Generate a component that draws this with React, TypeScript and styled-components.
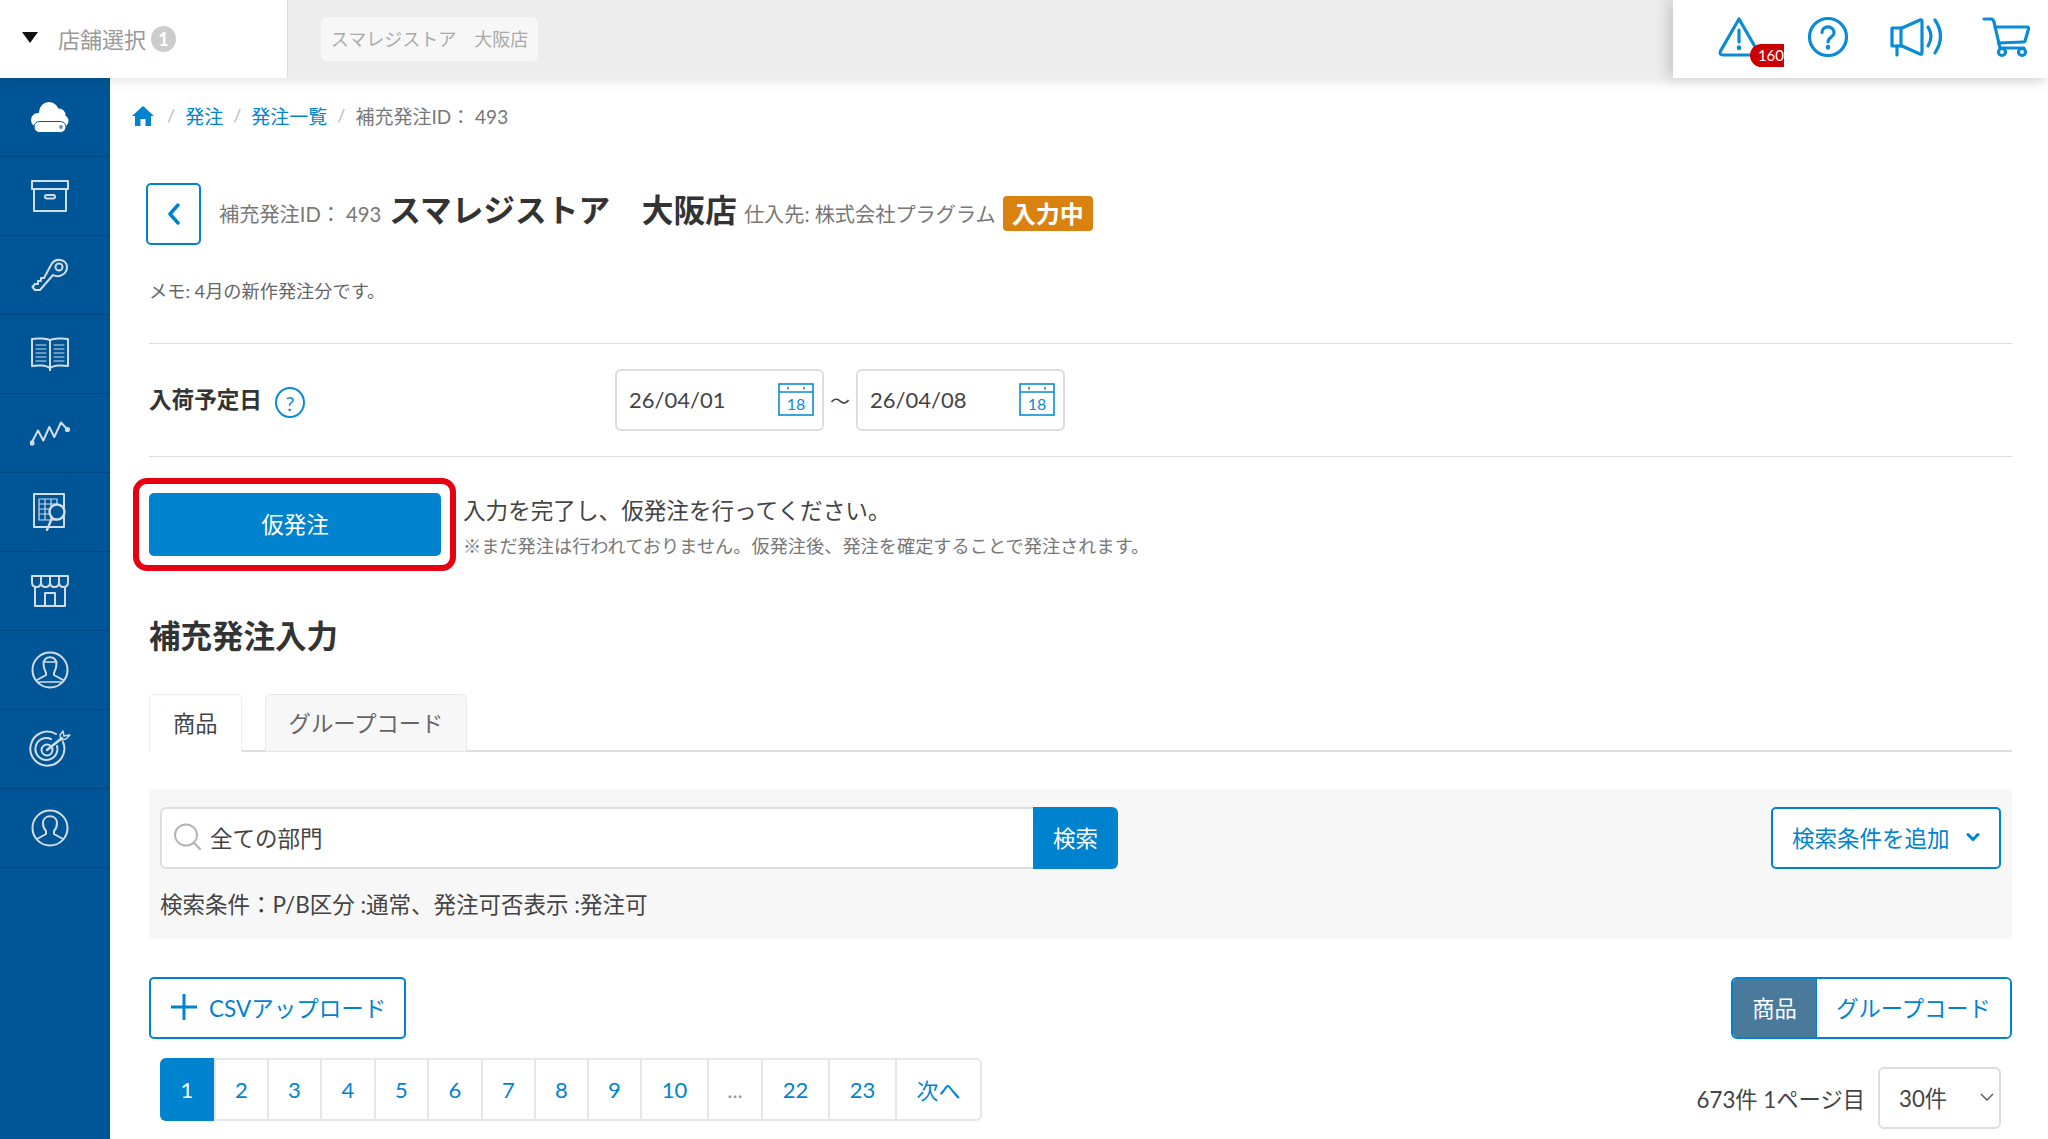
import React from "react";
import styled, { createGlobalStyle } from "styled-components";

const BLUE = "#0a8bd6";
const PRIMARY = "#0083cf";

const pages = [
  { label: "1", width: 54, active: true },
  { label: "2", width: 53 },
  { label: "3", width: 53 },
  { label: "4", width: 54 },
  { label: "5", width: 53 },
  { label: "6", width: 54 },
  { label: "7", width: 53 },
  { label: "8", width: 53 },
  { label: "9", width: 53 },
  { label: "10", width: 67 },
  { label: "...", width: 54, muted: true },
  { label: "22", width: 67 },
  { label: "23", width: 67 },
  { label: "次へ", width: 85 },
];

const WarningIcon = () => (
  <TopSvg width="44" height="42" viewBox="0 0 44 42">
    <path d="M22 3 L40.500 35 Q42 39 38 39 L6 39 Q2 39 3.500 35 Z" />
    <path d="M22 14 V26" />
    <path d="M22 31.500 V32" strokeWidth="4.500" />
  </TopSvg>
);

const HelpIcon = () => (
  <TopSvg width="42" height="42" viewBox="0 0 42 42" $gap={46}>
    <circle cx="21" cy="21" r="18.500" />
    <path d="M15 16.500 C15 8.500 27.500 9.500 27 17 C26.800 21 21 21 21 26" />
    <path d="M21 31 V31.500" strokeWidth="4.500" />
  </TopSvg>
);

const MegaphoneIcon = () => (
  <TopSvg width="54" height="40" viewBox="0 0 54 40" $gap={41}>
    <path d="M2 11 H12 L30 3 Q32 2 32 5 V35 Q32 38 30 37 L12 29 H2 Z" />
    <path d="M11 11 V29" />
    <path d="M7 29 V38" />
    <path d="M38 10 Q44 19 38 29" />
    <path d="M45 3 Q56 19 45 36" />
  </TopSvg>
);

const CartIcon = () => (
  <TopSvg width="48" height="42" viewBox="0 0 48 42" $gap={38}>
    <path d="M2 3 H9 Q11 3 12 6 L18 32 H42" />
    <path d="M13 11 H45 Q47 11 46.500 13 L43 25 Q42.500 26 41 26 L16.500 27" />
    <circle cx="20" cy="36" r="3.500" />
    <circle cx="40" cy="36" r="3.500" />
  </TopSvg>
);

const CloudIcon = () => (
  <svg width="40" height="32" viewBox="0 0 40 32">
    <g fill="#fff">
      <circle cx="8" cy="19" r="7" />
      <circle cx="19" cy="11" r="10" />
      <circle cx="29" cy="14" r="6.500" />
      <circle cx="32" cy="20" r="6.500" />
      <rect x="8" y="12" width="24" height="12" />
    </g>
    <rect x="4" y="20.500" width="32" height="11" rx="5.500" fill="#fff" stroke="#005596" strokeWidth="1" />
    <circle cx="31" cy="26" r="1.900" fill="#6f95b6" />
  </svg>
);

const BoxIcon = () => (
  <SideSvg width="38" height="32" viewBox="0 0 38 32">
    <rect x="1" y="1" width="36" height="8" />
    <rect x="3" y="9" width="32" height="22" />
    <rect x="14" y="15" width="10" height="3.500" rx="1.700" />
  </SideSvg>
);

const KeyIcon = () => (
  <SideSvg width="38" height="34" viewBox="0 0 38 34">
    <path d="M20 7 C24 -1 36 1 36 9 C36 17 27 20 22 17 L9 32 H4 L1.500 29 L4 26 H7 V23 H10 V20 H13 Z" />
    <circle cx="28" cy="9" r="3.500" />
  </SideSvg>
);

const BookIcon = () => (
  <SideSvg width="38" height="34" viewBox="0 0 38 34">
    <path d="M19 3 C15 1.500 6 1 1 2 V29 C6 28 15 28 19 31 C23 28 32 28 37 29 V2 C32 1 23 1.500 19 3 Z" />
    <path d="M19 3 V34" />
    <path d="M5 8 H15 M5 12 H15 M5 16 H15 M5 20 H15 M5 24 H15 M23 8 H33 M23 12 H33 M23 16 H33 M23 20 H33 M23 24 H33" strokeWidth="1.200" />
  </SideSvg>
);

const ChartIcon = () => (
  <SideSvg width="40" height="26" viewBox="0 0 40 26" strokeWidth="2.400">
    <path d="M1.500 23 L8 10.500 L13.300 20.500 L19.300 7 L24.300 17 L31 2.500 L37.500 9.500" />
    <circle cx="2" cy="23" r="1.600" />
    <circle cx="37.500" cy="9.500" r="1.600" />
  </SideSvg>
);

const TableIcon = () => (
  <SideSvg width="34" height="38" viewBox="0 0 34 38">
    <rect x="1" y="1" width="30" height="33" />
    <path d="M6 6 H24 V27 H6 Z M6 11 H24 M6 16 H24 M6 21 H24 M12 6 V27 M18 6 V27" strokeWidth="1.200" />
    <circle cx="24" cy="19" r="7.500" fill="#005596" strokeWidth="2.400" />
    <path d="M19 25 L14 37" strokeWidth="2.400" />
  </SideSvg>
);

const StoreIcon = () => (
  <SideSvg width="38" height="34" viewBox="0 0 38 34">
    <path d="M1 2 H37 V8 Q37 13 32.500 13 Q28 13 28 8 Q28 13 23.500 13 Q19 13 19 8 Q19 13 14.500 13 Q10 13 10 8 Q10 13 5.500 13 Q1 13 1 8 Z" />
    <path d="M10 2 V8 M19 2 V8 M28 2 V8" />
    <path d="M4 13 V32 H34 V13" />
    <path d="M14 32 V19 H24 V32" />
  </SideSvg>
);

const StaffIcon = () => (
  <SideSvg width="38" height="38" viewBox="0 0 38 38">
    <circle cx="19" cy="19" r="17.500" />
    <path d="M12.500 13 C12 4 26 4 25.500 13 C25.500 17 24 20 23 22 V24 L32 29 M15 22 C14 20 12.500 17 12.500 13 M15 22 V24 L6 29" />
    <path d="M12.500 11 H25.500" strokeWidth="1.400" />
    <path d="M8 31 H30" strokeWidth="1.400" />
  </SideSvg>
);

const TargetIcon = () => (
  <SideSvg width="42" height="38" viewBox="0 0 42 38">
    <path d="M34 12 A17 17 0 1 1 27 4" />
    <path d="M28 16 A11 11 0 1 1 22 9" />
    <circle cx="18" cy="20" r="5.500" />
    <path d="M18 20 L33 8" strokeWidth="2.400" />
    <path d="M31 5 L34 1 L35 6 L41 5 L37 9 L32 10 Z" strokeWidth="1.400" />
  </SideSvg>
);

const UserIcon = () => (
  <SideSvg width="38" height="38" viewBox="0 0 38 38">
    <circle cx="19" cy="19" r="17.500" />
    <path d="M6 30 L15 25 V22 C13 20 12 17 12 14 C12 5 26 5 26 14 C26 17 25 20 23 22 V25 L32 30" />
  </SideSvg>
);

const CalendarIcon = () => (
  <CalendarSvg width="36" height="33" viewBox="0 0 36 33">
    <rect x="1" y="1" width="34" height="31" fill="none" stroke={BLUE} strokeWidth="1.600" />
    <path d="M1 9 H35" stroke={BLUE} strokeWidth="1.600" />
    <path d="M10 4 V6.500 M26 4 V6.500" stroke={BLUE} strokeWidth="1.600" />
    <text x="18" y="27" textAnchor="middle" fontSize="16" fill={BLUE}>
      18
    </text>
  </CalendarSvg>
);

const App = () => {
  return (
    <>
      <GlobalStyle />
      <Page>
        <TopBar>
          <StoreSelect>
            <Caret />
            <StoreSelectLabel>店舗選択</StoreSelectLabel>
            <CountBadge>1</CountBadge>
          </StoreSelect>
          <StoreStrip>
            <StoreChip>スマレジストア　大阪店</StoreChip>
          </StoreStrip>
          <TopActions>
            <AlertButton>
              <WarningIcon />
              <AlertCount>160</AlertCount>
            </AlertButton>
            <HelpIcon />
            <MegaphoneIcon />
            <CartIcon />
          </TopActions>
        </TopBar>

        <Body>
          <Sidebar>
            <SideItem><CloudIcon /></SideItem>
            <SideItem><BoxIcon /></SideItem>
            <SideItem><KeyIcon /></SideItem>
            <SideItem><BookIcon /></SideItem>
            <SideItem><ChartIcon /></SideItem>
            <SideItem><TableIcon /></SideItem>
            <SideItem><StoreIcon /></SideItem>
            <SideItem><StaffIcon /></SideItem>
            <SideItem><TargetIcon /></SideItem>
            <SideItem><UserIcon /></SideItem>
          </Sidebar>

          <Main>
            <Breadcrumb>
              <HomeSvg width="22" height="20" viewBox="0 0 22 20">
                <path
                  fill={PRIMARY}
                  d="M11 0 L22 10 L19 10 V20 H13.500 V13 H8.500 V20 H3 V10 H0 Z"
                />
              </HomeSvg>
              <CrumbSep>/</CrumbSep>
              <CrumbLink>発注</CrumbLink>
              <CrumbSep>/</CrumbSep>
              <CrumbLink>発注一覧</CrumbLink>
              <CrumbSep>/</CrumbSep>
              <CrumbCurrent>補充発注ID： 493</CrumbCurrent>
            </Breadcrumb>

            <TitleRow>
              <BackButton>
                <svg width="14" height="22" viewBox="0 0 14 22">
                  <path d="M11 2 L3 11 L11 20" fill="none" stroke={PRIMARY} strokeWidth="3.500" strokeLinecap="round" strokeLinejoin="round" />
                </svg>
              </BackButton>
              <TitleMeta>補充発注ID： 493</TitleMeta>
              <Title>スマレジストア　大阪店</Title>
              <TitleMeta>仕入先: 株式会社プラグラム</TitleMeta>
              <StatusBadge>入力中</StatusBadge>
            </TitleRow>

            <Memo>メモ: 4月の新作発注分です。</Memo>

            <DateRow>
              <DateLabel>
                入荷予定日
                <HintCircle>?</HintCircle>
              </DateLabel>
              <DateBox>
                26/04/01
                <CalendarIcon />
              </DateBox>
              <DateTilde>～</DateTilde>
              <DateBox>
                26/04/08
                <CalendarIcon />
              </DateBox>
            </DateRow>

            <ActionRow>
              <HighlightedAction>
                <PrimaryButton>仮発注</PrimaryButton>
              </HighlightedAction>
              <ActionText>
                <ActionLead>入力を完了し、仮発注を行ってください。</ActionLead>
                <ActionNote>※まだ発注は行われておりません。仮発注後、発注を確定することで発注されます。</ActionNote>
              </ActionText>
            </ActionRow>

            <SectionTitle>補充発注入力</SectionTitle>

            <Tabs>
              <Tab $active>商品</Tab>
              <Tab>グループコード</Tab>
            </Tabs>

            <SearchPanel>
              <SearchRow>
                <SearchGroup>
                  <SearchInput>
                    <svg width="30" height="28" viewBox="0 0 30 28">
                      <ellipse cx="13" cy="12" rx="11" ry="10.500" fill="none" stroke="#b5b5b5" strokeWidth="2" />
                      <path d="M21 20 L27 26" stroke="#b5b5b5" strokeWidth="2.400" strokeLinecap="round" />
                    </svg>
                    全ての部門
                  </SearchInput>
                  <SearchButton>検索</SearchButton>
                </SearchGroup>
                <OutlineButton>
                  検索条件を追加
                  <svg width="14" height="10" viewBox="0 0 14 10">
                    <path d="M2 2.500 L7 7.500 L12 2.500" fill="none" stroke={PRIMARY} strokeWidth="3" strokeLinecap="round" strokeLinejoin="round" />
                  </svg>
                </OutlineButton>
              </SearchRow>
              <Conditions>検索条件：P/B区分 :通常、発注可否表示 :発注可</Conditions>
            </SearchPanel>

            <ToolRow>
              <CsvButton>
                <svg width="28" height="28" viewBox="0 0 28 28">
                  <path d="M14 1 V27 M1 14 H27" stroke={PRIMARY} strokeWidth="3" />
                </svg>
                CSVアップロード
              </CsvButton>
              <Toggle>
                <ToggleItem $active>商品</ToggleItem>
                <ToggleItem>グループコード</ToggleItem>
              </Toggle>
            </ToolRow>

            <ListRow>
              <Pagination>
                {pages.map((p) => (
                  <PageItem key={p.label} $width={p.width} $active={p.active} $muted={p.muted}>
                    {p.label}
                  </PageItem>
                ))}
              </Pagination>
              <ListSummary>
                673件 1ページ目
                <PerPage>
                  30件
                  <svg width="16" height="10" viewBox="0 0 16 10">
                    <path d="M2 2 L8 8 L14 2" fill="none" stroke="#555" strokeWidth="1.400" />
                  </svg>
                </PerPage>
              </ListSummary>
            </ListRow>
          </Main>
        </Body>
      </Page>
    </>
  );
};

export default App;

const GlobalStyle = createGlobalStyle`
  html, body {
    margin: 0;
    padding: 0;
    background: #fff;
  }
  body {
    font-family: Lato, "Noto Sans CJK JP", sans-serif;
    color: #333;
  }
  * {
    box-sizing: border-box;
  }
`;

const Page = styled.div`
  width: 2048px;
  height: 1139px;
  overflow: hidden;
  display: flex;
  flex-direction: column;
`;

const TopBar = styled.header`
  position: relative;
  z-index: 2;
  display: flex;
  height: 78px;
  flex: none;
  box-shadow: 0 2px 14px rgba(0, 0, 0, 0.12);
`;

const StoreSelect = styled.div`
  width: 288px;
  flex: none;
  background: #fff;
  border-right: 1px solid #ddd;
  display: flex;
  align-items: center;
  padding: 0 0 3px 22px;
`;

const Caret = styled.span`
  width: 0;
  height: 0;
  border-left: 8px solid transparent;
  border-right: 8px solid transparent;
  border-top: 11px solid #111;
  margin-right: 20px;
`;

const StoreSelectLabel = styled.span`
  font-size: 22px;
  color: #999;
`;

const CountBadge = styled.span`
  width: 25px;
  height: 26px;
  border-radius: 50%;
  margin-left: 5px;
  margin-top: 3px;
  background: #ccc;
  color: #fff;
  font-size: 18px;
  font-weight: 700;
  display: flex;
  align-items: center;
  justify-content: center;
`;

const StoreStrip = styled.div`
  flex: 1;
  background: #ededed;
  display: flex;
  align-items: center;
  padding-left: 33px;
`;

const StoreChip = styled.div`
  height: 44px;
  width: 217px;
  padding-bottom: 3px;
  background: #f7f7f7;
  border-radius: 6px;
  color: #aaa;
  font-size: 18px;
  display: flex;
  align-items: center;
  justify-content: center;
  white-space: nowrap;
`;

const TopActions = styled.div`
  width: 375px;
  flex: none;
  background: #fff;
  box-shadow: -6px 0 12px rgba(0, 0, 0, 0.14);
  display: flex;
  align-items: center;
  padding: 0 0 4px 44px;
`;

const TopSvg = styled.svg<{ $gap?: number }>`
  display: block;
  flex: none;
  margin-left: ${(p) => p.$gap ?? 0}px;
  fill: none;
  stroke: ${BLUE};
  stroke-width: 3.2;
  stroke-linecap: round;
  stroke-linejoin: round;
`;

const AlertButton = styled.div`
  position: relative;
  flex: none;
  width: 44px;
  height: 42px;
`;

const AlertCount = styled.span`
  position: absolute;
  left: 33px;
  top: 28px;
  width: 34px;
  height: 23px;
  background: #cc0000;
  border-radius: 12px 0 0 12px;
  color: #fff;
  font-size: 15px;
  line-height: 23px;
  text-align: right;
  white-space: nowrap;
  overflow: hidden;
`;

const Body = styled.div`
  flex: 1;
  display: flex;
  min-height: 0;
`;

const Sidebar = styled.nav`
  width: 110px;
  flex: none;
  background: #005596;
`;

const SideItem = styled.div`
  height: 79px;
  padding-right: 10px;
  border-bottom: 1px solid rgba(0, 0, 0, 0.14);
  display: flex;
  align-items: center;
  justify-content: center;
`;

const SideSvg = styled.svg`
  display: block;
  fill: none;
  stroke: #d3dde7;
  stroke-width: 2;
  stroke-linecap: round;
  stroke-linejoin: round;
`;

const Main = styled.main`
  flex: 1;
  min-width: 0;
  padding: 0 36px 0 39px;
`;

const Breadcrumb = styled.div`
  display: flex;
  align-items: center;
  height: 32px;
  margin: 21px 0 0 -17px;
  font-size: 19px;
`;

const HomeSvg = styled.svg`
  display: block;
  margin: 2px 3px 0 0;
`;

const CrumbSep = styled.span`
  color: #bbb;
  margin: 0 10px;
  font-size: 18px;
`;

const CrumbLink = styled.a`
  color: ${PRIMARY};
`;

const CrumbCurrent = styled.span`
  color: #777;
`;

const TitleRow = styled.div`
  display: flex;
  align-items: center;
  height: 62px;
  margin: 52px 0 0 -3px;
`;

const BackButton = styled.button`
  width: 55px;
  height: 62px;
  padding: 0;
  background: #fff;
  border: 2px solid ${PRIMARY};
  border-radius: 5px;
  display: flex;
  align-items: center;
  justify-content: center;
  margin-right: 18px;
`;

const TitleMeta = styled.span`
  margin-top: -1px;
  font-size: 20.200px;
  color: #777;
  white-space: nowrap;
`;

const Title = styled.h1`
  margin: -8px 7px 0 8px;
  font-size: 31.700px;
  line-height: 40px;
  font-weight: 700;
  color: #333;
  white-space: nowrap;
`;

const StatusBadge = styled.span`
  width: 90px;
  height: 35px;
  margin: -2px 0 0 7px;
  padding-bottom: 2px;
  border-radius: 4px;
  background: #d9820f;
  color: #fff;
  font-size: 24px;
  font-weight: 700;
  display: flex;
  align-items: center;
  justify-content: center;
`;

const Memo = styled.p`
  margin: 33px 0 0;
  font-size: 18.200px;
  line-height: 26px;
  color: #666;
`;

const DateRow = styled.div`
  margin-top: 39px;
  height: 114px;
  border-top: 1px solid #ddd;
  border-bottom: 1px solid #ddd;
  display: flex;
  align-items: center;
`;

const DateLabel = styled.div`
  width: 466px;
  padding-bottom: 4px;
  font-size: 22.600px;
  font-weight: 700;
  color: #333;
  display: flex;
  align-items: center;
`;

const HintCircle = styled.span`
  width: 30px;
  height: 31px;
  margin: 9px 0 0 13px;
  border: 2px solid ${BLUE};
  border-radius: 50%;
  color: ${BLUE};
  font-size: 20px;
  font-weight: 400;
  display: flex;
  align-items: center;
  justify-content: center;
`;

const DateBox = styled.div`
  width: 209px;
  height: 62px;
  padding: 0 8px 1px 12px;
  background: #fff;
  border: 2px solid #ddd;
  border-radius: 6px;
  font-size: 22px;
  color: #444;
  display: flex;
  align-items: center;
  justify-content: space-between;
`;

const CalendarSvg = styled.svg`
  display: block;
  flex: none;
`;

const DateTilde = styled.span`
  width: 32px;
  font-size: 20px;
  color: #444;
  text-align: center;
`;

const ActionRow = styled.div`
  margin-top: 36px;
  display: flex;
  align-items: center;
  height: 63px;
`;

const HighlightedAction = styled.div`
  position: relative;
  flex: none;
  &::after {
    content: "";
    position: absolute;
    inset: -15px -15px -15px -16px;
    border: 6px solid #e60012;
    border-radius: 14px;
    pointer-events: none;
  }
`;

const PrimaryButton = styled.button`
  display: block;
  width: 292px;
  height: 63px;
  padding: 0 0 3px;
  border: none;
  border-radius: 5px;
  background: ${PRIMARY};
  color: #fff;
  font-family: inherit;
  font-size: 22.500px;
`;

const ActionText = styled.div`
  margin-left: 22px;
  padding-top: 8px;
`;

const ActionLead = styled.div`
  font-size: 22.600px;
  line-height: 36px;
  color: #444;
`;

const ActionNote = styled.div`
  font-size: 18.200px;
  line-height: 35px;
  color: #777;
  white-space: nowrap;
`;

const SectionTitle = styled.h2`
  margin: 58px 0 0;
  font-size: 31.500px;
  line-height: 44px;
  font-weight: 700;
  color: #333;
`;

const Tabs = styled.div`
  margin-top: 36px;
  display: flex;
  gap: 23px;
  height: 58px;
  border-bottom: 2px solid #ddd;
`;

const Tab = styled.div<{ $active?: boolean }>`
  height: 58px;
  padding: 0 23px 3px;
  border: 1px solid ${(p) => (p.$active ? "#eee" : "#e8e8e8")};
  border-bottom: ${(p) => (p.$active ? "none" : "1px solid #e8e8e8")};
  border-radius: 5px 5px 0 0;
  background: ${(p) => (p.$active ? "#fff" : "#f7f7f7")};
  font-size: 22.300px;
  color: ${(p) => (p.$active ? "#444" : "#666")};
  display: flex;
  align-items: center;
`;

const SearchPanel = styled.section`
  margin-top: 37px;
  height: 150px;
  padding: 18px 11px 0 11px;
  background: #f7f7f7;
`;

const SearchRow = styled.div`
  display: flex;
  justify-content: space-between;
`;

const SearchGroup = styled.div`
  display: flex;
  width: 958px;
  height: 62px;
`;

const SearchInput = styled.div`
  flex: 1;
  padding: 0 0 3px 11px;
  background: #fff;
  border: 2px solid #ddd;
  border-right: none;
  border-radius: 6px 0 0 6px;
  font-size: 22.500px;
  color: #444;
  display: flex;
  align-items: center;
  gap: 7px;
`;

const SearchButton = styled.button`
  width: 85px;
  padding: 0 0 3px;
  border: none;
  border-radius: 0 6px 6px 0;
  background: ${PRIMARY};
  color: #fff;
  font-family: inherit;
  font-size: 22.500px;
`;

const OutlineButton = styled.button`
  width: 230px;
  height: 62px;
  padding: 0 19px 3px 19px;
  background: #fff;
  border: 2px solid ${PRIMARY};
  border-radius: 5px;
  color: ${PRIMARY};
  font-family: inherit;
  font-size: 22.500px;
  display: flex;
  align-items: center;
  justify-content: space-between;
  white-space: nowrap;
`;

const Conditions = styled.div`
  margin-top: 23px;
  font-size: 22.500px;
  line-height: 26px;
  color: #444;
  white-space: nowrap;
`;

const ToolRow = styled.div`
  margin-top: 38px;
  display: flex;
  justify-content: space-between;
`;

const CsvButton = styled.button`
  width: 257px;
  height: 62px;
  padding: 0 0 3px 19px;
  background: #fff;
  border: 2px solid ${PRIMARY};
  border-radius: 5px;
  color: ${PRIMARY};
  font-family: inherit;
  font-size: 22.500px;
  display: flex;
  align-items: center;
  gap: 11px;
  white-space: nowrap;
`;

const Toggle = styled.div`
  display: flex;
  width: 281px;
  height: 62px;
  border: 2px solid ${PRIMARY};
  border-radius: 6px;
  overflow: hidden;
`;

const ToggleItem = styled.div<{ $active?: boolean }>`
  flex: ${(p) => (p.$active ? "0 0 84px" : "1")};
  padding-bottom: 3px;
  background: ${(p) => (p.$active ? "#4a7a9b" : "#fff")};
  color: ${(p) => (p.$active ? "#fff" : PRIMARY)};
  border-right: ${(p) => (p.$active ? `1px solid ${PRIMARY}` : "none")};
  font-size: 22.300px;
  display: flex;
  align-items: center;
  justify-content: center;
  white-space: nowrap;
`;

const ListRow = styled.div`
  margin-top: 19px;
  padding: 0 11px;
  display: flex;
  justify-content: space-between;
  align-items: flex-start;
`;

const Pagination = styled.div`
  display: flex;
  height: 63px;
  border: 2px solid #e6e6e6;
  border-left: none;
  border-radius: 6px;
`;

const PageItem = styled.a<{ $width: number; $active?: boolean; $muted?: boolean }>`
  width: ${(p) => p.$width}px;
  margin: ${(p) => (p.$active ? "-2px 0" : "0")};
  padding-bottom: 1px;
  background: ${(p) => (p.$active ? PRIMARY : "#fff")};
  color: ${(p) => (p.$active ? "#fff" : p.$muted ? "#999" : PRIMARY)};
  border-radius: ${(p) => (p.$active ? "6px 0 0 6px" : "0")};
  font-size: 22px;
  display: flex;
  align-items: center;
  justify-content: center;
  & + & {
    border-left: 2px solid #e6e6e6;
  }
  &:last-child {
    border-radius: 0 6px 6px 0;
  }
`;

const ListSummary = styled.div`
  margin-top: 9px;
  font-size: 22.300px;
  color: #444;
  display: flex;
  align-items: center;
  gap: 13px;
  white-space: nowrap;
`;

const PerPage = styled.div`
  width: 123px;
  height: 62px;
  padding: 0 4px 2px 19px;
  background: #fff;
  border: 2px solid #ddd;
  border-radius: 6px;
  display: flex;
  align-items: center;
  justify-content: space-between;
`;
